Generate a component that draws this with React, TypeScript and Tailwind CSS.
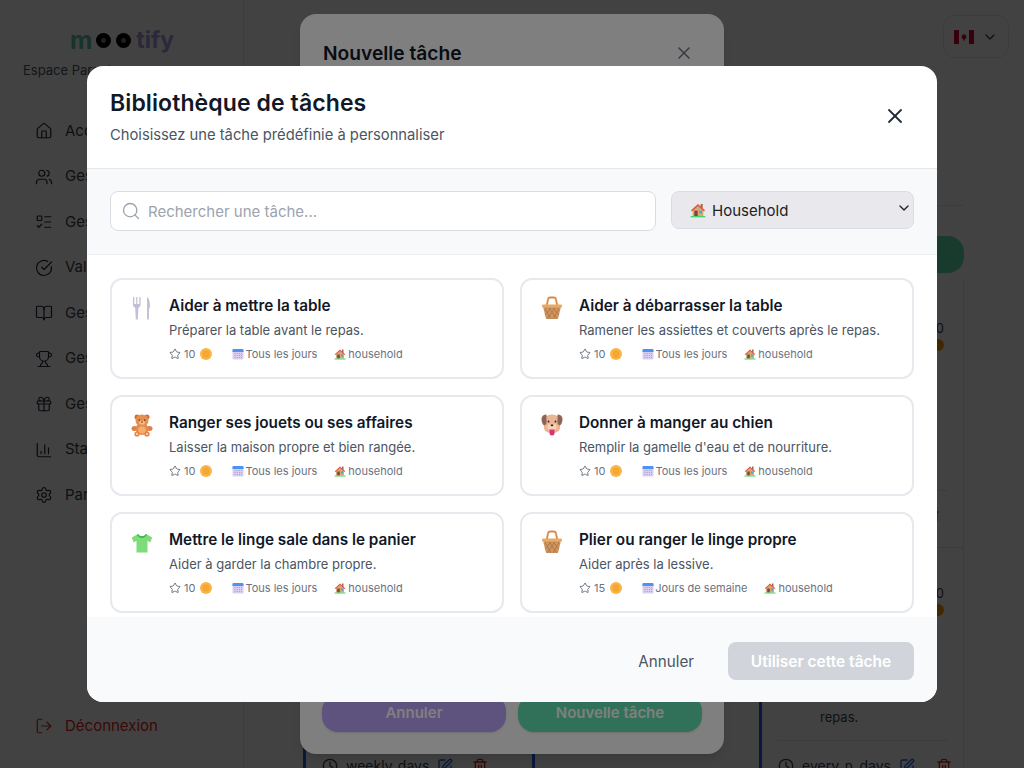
import React from "react";
import {
  BookOpen,
  ChartColumn,
  ChevronDown,
  CircleCheckBig,
  Clock,
  Gift,
  House,
  ListTodo,
  LogOut,
  Search,
  Settings,
  SquarePen,
  Star,
  Trash2,
  Trophy,
  Users,
  X,
} from "lucide-react";

// the emoji are drawn by hand, the sandbox has no colour emoji font
const HouseEmoji = ({ size = 12 }: { size?: number }) => (
  <svg width={size} height={size} viewBox="0 0 24 24" className="shrink-0">
    <rect x="16" y="3" width="3" height="7" fill="#a1664a" />
    <path d="M4 12 12 5l8 7v9H4z" fill="#d9a777" />
    <path d="M1.5 12.5 12 3l10.5 9.5-1.5 1.6L12 6 3 14.1z" fill="#e2583e" />
    <rect x="6.5" y="13" width="5" height="8" fill="#7b4a35" />
    <rect x="14" y="13" width="4" height="4" fill="#3fa9e8" />
    <rect x="1" y="21" width="22" height="2" fill="#45d36b" />
  </svg>
);

const Coin = () => (
  <svg width="12" height="12" viewBox="0 0 24 24" className="shrink-0">
    <circle cx="12" cy="12" r="12" fill="#fbb542" />
    <rect x="7" y="6" width="10" height="12" rx="3" fill="#f6a735" stroke="#eb9a2c" strokeWidth="1.2" />
  </svg>
);

const CalendarEmoji = () => (
  <svg width="12" height="12" viewBox="0 0 24 24" className="shrink-0">
    <rect x="1" y="2" width="22" height="21" rx="2.5" fill="#d9cdf0" />
    <path d="M1 8V4.500A2.500 2.500 0 0 1 3.500 2h17A2.500 2.500 0 0 1 23 4.500V8z" fill="#4b93f2" />
    {[6, 10.5, 15, 19].map((x) =>
      [11, 15, 19].map((y) => <rect key={`${x}-${y}`} x={x - 1} y={y - 1} width="2" height="2" fill="#a79fd6" />)
    )}
  </svg>
);

const Cutlery = () => (
  <svg width="22" height="24" viewBox="0 0 22 24">
    <path d="M2 1v7.500c0 1.800.9 2.800 2.200 3.200L4.800 23.500h2L7.400 11.700C8.700 11.300 9.600 10.300 9.600 8.500V1H8.300v7H6.400V1H5.200v7H3.300V1z" fill="#c4bfd6" />
    <path d="M16 1c2.200 1 3 5 3 9 0 1.500-.5 2.500-1 3l-.2 10.500h-1.800z" fill="#c4bfd6" />
  </svg>
);

const Basket = () => (
  <svg width="22" height="24" viewBox="0 0 22 24">
    <path d="M5.500 11 7 3.500C7.200 2.300 8 1.500 9.200 1.500h3.600c1.200 0 2 .8 2.200 2L16.500 11" fill="none" stroke="#d98a4b" strokeWidth="1.800" />
    <path d="M2 10.500h18L17.300 22a1.500 1.500 0 0 1-1.400 1H6.100a1.500 1.500 0 0 1-1.400-1z" fill="#cf9560" />
    <path d="M5 14l5 9M8 12l8 11M12 12l6 7M17 12l1 2M17 14l-5 9M14 12l-8 11M10 12l-6 7M5 12l-1 2" stroke="#a86f3d" strokeWidth=".7" />
    <rect x="1" y="8.500" width="20" height="3" rx="1" fill="#e8a965" />
  </svg>
);

const Teddy = () => (
  <svg width="22" height="24" viewBox="0 0 22 24">
    <circle cx="6" cy="4" r="2.500" fill="#c9733c" />
    <circle cx="16" cy="4" r="2.500" fill="#c9733c" />
    <ellipse cx="3.500" cy="15.500" rx="3" ry="2.500" fill="#e27f45" />
    <ellipse cx="18.500" cy="15.500" rx="3" ry="2.500" fill="#e27f45" />
    <ellipse cx="11" cy="16" rx="6.500" ry="6" fill="#e58a4c" />
    <ellipse cx="11" cy="17" rx="3.800" ry="3.600" fill="#f5b070" />
    <ellipse cx="11" cy="7.500" rx="6.500" ry="6" fill="#e58f50" />
    <ellipse cx="11" cy="9.500" rx="2.800" ry="2" fill="#f7c08a" />
    <circle cx="8.300" cy="7" r=".8" fill="#5a2e1a" />
    <circle cx="13.700" cy="7" r=".8" fill="#5a2e1a" />
    <circle cx="11" cy="9" r=".8" fill="#5a2e1a" />
    <circle cx="6" cy="21" r="2.600" fill="#e27f45" />
    <circle cx="16" cy="21" r="2.600" fill="#e27f45" />
    <circle cx="6" cy="21" r="1.300" fill="#f9c898" />
    <circle cx="16" cy="21" r="1.300" fill="#f9c898" />
  </svg>
);

const Dog = () => (
  <svg width="22" height="24" viewBox="0 0 22 24">
    <path d="M3 7c0-3 3.500-5.500 8-5.500S19 4 19 7v8c0 3-3.500 5-8 5s-8-2-8-5z" fill="#ebb694" />
    <path d="M5.500 1.500C2.500 1.500.5 3 .5 6c0 2.500.8 5 2 6 1 .8 2.500 0 3-2z" fill="#8f6458" />
    <path d="M16.500 1.500c3 0 5 1.500 5 4.500 0 2.500-.8 5-2 6-1 .8-2.500 0-3-2z" fill="#8f6458" />
    <circle cx="7.500" cy="8.500" r="1" fill="#3d2a26" />
    <circle cx="14.500" cy="8.500" r="1" fill="#3d2a26" />
    <ellipse cx="11" cy="14" rx="4.500" ry="3.200" fill="#f7d3b6" />
    <ellipse cx="11" cy="12.200" rx="1.400" ry="1" fill="#3d2a26" />
    <path d="M8.500 16.500h5v3.500a2.500 2.500 0 0 1-5 0z" fill="#d9357c" />
  </svg>
);

const Shirt = () => (
  <svg width="22" height="24" viewBox="0 0 22 24">
    <path d="M7 4 .8 7.500l1.700 4.700L5.500 11v11.500h11V11l3 1.200 1.700-4.700L15 4c-1 1.500-2.300 2.200-4 2.200S8 5.500 7 4z" fill="#7fdc7a" />
    <path d="M7 4c1 1.500 2.300 2.200 4 2.200S14 5.500 15 4l1 .6C15 6.800 13.200 8 11 8S7 6.800 6 4.600z" fill="#3fb54a" />
  </svg>
);

type Task = {
  icon: React.ReactNode;
  title: string;
  desc: string;
  points: number;
  freq: string;
};

const TASKS: Task[] = [
  { icon: <Cutlery />, title: "Aider à mettre la table", desc: "Préparer la table avant le repas.", points: 10, freq: "Tous les jours" },
  { icon: <Basket />, title: "Aider à débarrasser la table", desc: "Ramener les assiettes et couverts après le repas.", points: 10, freq: "Tous les jours" },
  { icon: <Teddy />, title: "Ranger ses jouets ou ses affaires", desc: "Laisser la maison propre et bien rangée.", points: 10, freq: "Tous les jours" },
  { icon: <Dog />, title: "Donner à manger au chien", desc: "Remplir la gamelle d'eau et de nourriture.", points: 10, freq: "Tous les jours" },
  { icon: <Shirt />, title: "Mettre le linge sale dans le panier", desc: "Aider à garder la chambre propre.", points: 10, freq: "Tous les jours" },
  { icon: <Basket />, title: "Plier ou ranger le linge propre", desc: "Aider après la lessive.", points: 15, freq: "Jours de semaine" },
];

const NAV = [
  { icon: House, label: "Accueil" },
  { icon: Users, label: "Gestion des enfants" },
  { icon: ListTodo, label: "Gestion des tâches" },
  { icon: CircleCheckBig, label: "Validation" },
  { icon: BookOpen, label: "Gestion des lectures" },
  { icon: Trophy, label: "Gestion des défis" },
  { icon: Gift, label: "Gestion des récompenses" },
  { icon: ChartColumn, label: "Statistiques" },
  { icon: Settings, label: "Paramètres" },
];

function TaskCard({ task }: { task: Task }) {
  return (
    <div className="flex h-[101px] gap-4 rounded-xl border-2 border-[#e8e9ee] bg-white pl-[19px] pt-[16px]">
      <div className="w-[22px] shrink-0">{task.icon}</div>
      <div className="min-w-0">
        <div className="text-[15.300px] font-semibold leading-5 text-[#111827]">{task.title}</div>
        <div className="mt-[4px] text-[13px] leading-5 text-[#4b5563]">{task.desc}</div>
        <div className="mt-[4px] flex items-center gap-[17px] text-[11px] leading-5 text-[#6b7280]">
          <span className="mr-[3px] flex items-center">
            <Star size={12} strokeWidth={1.6} className="mr-[3px] text-[#4b5563]" />
            <span className="mr-[5px]">{task.points}</span>
            <Coin />
          </span>
          <span className="flex items-center gap-[1px]">
            <CalendarEmoji />
            {task.freq}
          </span>
          <span className="flex items-center gap-[2px]">
            <HouseEmoji />
            household
          </span>
        </div>
      </div>
    </div>
  );
}

type BackCardProps = {
  height: number;
  topGap: number;
  bodyGap: number;
  footer: string;
  trashGap: number;
  extra?: string;
  edge?: boolean;
};

// cards of the page behind the dialogs, only their edges can be seen
function BackCard({ height, topGap, bodyGap, footer, trashGap, extra, edge }: BackCardProps) {
  return (
    <div className={edge ? "border-l-[3px] border-r border-b border-l-[#2563eb] border-r-[#e5e7eb] border-b-[#e5e7eb]" : "border-l-[3px] border-l-[#2563eb]"} style={{ height }}>
      <div className="flex justify-end pr-[19px]" style={{ paddingTop: topGap }}>
        <div className="flex flex-col items-end gap-[3px] text-[13px] leading-4 text-[#374151]">
          <span>10</span>
          <span className="h-3 w-3 rounded-full bg-[#f59e0b]" />
        </div>
      </div>
      <div className="pl-[58px] text-[13px] leading-5 text-[#374151]" style={{ paddingTop: bodyGap }}>
        {extra ?? "\u00a0"}
      </div>
      <div className="mx-4 mt-[13px] flex items-center gap-2 border-t border-[#e5e7eb] pt-[15px] text-[14px] leading-5 text-[#374151]">
        <Clock size={16} />
        <span>{footer}</span>
        <SquarePen size={16} className="text-[#2563eb]" />
        <Trash2 size={16} className="ml-auto text-[#dc2626]" style={{ marginRight: trashGap }} />
      </div>
    </div>
  );
}

export default function App() {
  return (
    <div
      className="relative flex h-[768px] w-full overflow-hidden bg-white"
      style={{ fontFamily: "Inter, 'Noto Sans', sans-serif" }}
    >
      {/* Page behind the dialogs */}
      <aside className="flex w-[244px] shrink-0 flex-col border-r border-[#e5e7eb] pb-[32px]">
        <div className="flex items-center pl-[70px] pt-[23px] text-[23px] font-bold leading-[34px]">
          <span className="text-[24.500px] text-[#55c79f]">m</span>
          <span className="ml-[4px] flex h-[15px] w-[15px] items-center justify-center rounded-full bg-black">
            <span className="h-[5px] w-[5px] rounded-full bg-[#777]" />
          </span>
          <span className="mx-[5px] flex h-[15px] w-[15px] items-center justify-center rounded-full bg-black">
            <span className="h-[5px] w-[5px] rounded-full bg-[#777]" />
          </span>
          <span className="text-[#a999e0]">tify</span>
        </div>
        <div className="mt-[3px] pl-[23px] text-[13px] leading-5 text-[#4b5563]">Espace Parent</div>
        <nav className="mt-[41px] flex flex-col gap-[25.500px] pl-[35px]">
          {NAV.map((item) => (
            <div key={item.label} className="flex h-5 items-center gap-[12px] whitespace-nowrap text-[15px] text-[#374151]">
              <item.icon size={18} strokeWidth={1.6} className="shrink-0 text-[#1f2937]" />
              {item.label}
            </div>
          ))}
        </nav>
        <div className="mt-auto flex items-center gap-[12px] pl-[35px] text-[15px] leading-5 text-[#dc2626]">
          <LogOut size={18} strokeWidth={1.6} />
          Déconnexion
        </div>
      </aside>

      <main className="flex min-w-0 flex-1 flex-col pl-[59px] pr-[60px]">
        <div className="mr-[-45px] flex justify-end pt-[15px]">
          <div className="flex h-[43px] w-[66px] items-center justify-center gap-[8px] rounded-xl border border-[#e5e7eb]">
            <svg width="20" height="14" viewBox="0 0 20 14">
              <rect width="20" height="14" rx="1.500" fill="#fff" />
              <rect width="5" height="14" fill="#d80027" />
              <rect x="15" width="5" height="14" fill="#d80027" />
              <path d="M10 3.500l1 1.800 1.300-.4-.4 2 1.100.6-2.300 1.700.2 1.300h-1.800l.2-1.300L7 7.500l1.100-.6-.4-2 1.300.4z" fill="#d80027" />
            </svg>
            <ChevronDown size={16} className="text-[#374151]" />
          </div>
        </div>
        <div className="mt-[147px] border-t border-[#e5e7eb]" />
        <div className="mt-[30px] flex justify-end">
          <div className="flex h-[37px] w-[190px] items-center justify-center rounded-2xl bg-[#62e3b2] text-[15px] font-semibold text-white">
            Nouvelle tâche
          </div>
        </div>
        <div className="mt-[7px] grid grid-cols-[224px_222px_205px] gap-[5px]">
          <BackCard height={500} topGap={40} bodyGap={356} footer="weekly_days" trashGap={23} />
          <div className="h-[500px] border-l-[3px] border-l-[#2563eb]" />
          <div className="flex flex-col">
            <BackCard height={268} topGap={40} bodyGap={106} footer="daily" trashGap={7} edge />
            <BackCard height={240} topGap={37} bodyGap={91} footer="every_n_days" trashGap={-5} extra="repas." edge />
          </div>
        </div>
      </main>

      {/* First dialog: new task */}
      <div className="absolute inset-0 flex items-center justify-center bg-black/[.48]">
        <div className="flex h-[740px] w-[424px] flex-col rounded-2xl bg-white px-[22px] pb-[22px] pt-[27px] shadow-lg">
          <div className="flex items-center justify-between pl-[1px]">
            <div className="text-[19.200px] font-semibold leading-6 text-[#111827]">Nouvelle tâche</div>
            <X size={20} strokeWidth={1.8} className="mr-[8px] text-[#6b7280]" />
          </div>
          <div className="mt-auto flex gap-3">
            <div className="flex h-[37px] flex-1 items-center justify-center rounded-2xl bg-[#bda5ff] text-[15px] font-semibold text-white shadow">
              Annuler
            </div>
            <div className="flex h-[37px] flex-1 items-center justify-center rounded-2xl bg-[#62e3b2] text-[15px] font-semibold text-white shadow">
              Nouvelle tâche
            </div>
          </div>
        </div>
      </div>

      {/* Second dialog: task library */}
      <div className="absolute inset-0 flex items-center justify-center bg-black/50">
        <div className="flex h-[636px] w-[850px] flex-col overflow-hidden rounded-2xl bg-white">
          <div className="flex h-[103px] shrink-0 items-start justify-between border-b border-[#e5e7eb] px-[23px] pt-[22px]">
            <div>
              <div className="text-[23px] font-semibold leading-[30px] tracking-[0.1px] text-[#111827]">Bibliothèque de tâches</div>
              <div className="mt-[6px] text-[14.750px] leading-[22px] text-[#4b5563]">
                Choisissez une tâche prédéfinie à personnaliser
              </div>
            </div>
            <X size={24} strokeWidth={1.8} className="mr-[7px] mt-[16px] text-[#1f2937]" />
          </div>

          <div className="flex h-[86px] shrink-0 items-start gap-[15px] border-b border-[#eceef2] bg-[#f8f9fb] px-[23px] pt-[22px]">
            <div className="flex h-10 w-[546px] items-center gap-[7px] rounded-lg border border-[#d9dce3] bg-white pl-[10px] text-[15px] text-[#9ca3af]">
              <Search size={20} strokeWidth={1.6} />
              <span className="pt-[2px]">Rechercher une tâche...</span>
            </div>
            <div className="flex h-[38px] flex-1 items-center rounded-lg border border-[#d9dce3] bg-[#e8e8ed] pl-[18px] pr-[1px] text-[15px] text-[#222]">
              <HouseEmoji size={16} />
              <span className="ml-[6px] pt-[3px]">Household</span>
              <ChevronDown size={16} strokeWidth={2} className="mb-[4px] ml-auto" />
            </div>
          </div>

          <div className="grid h-[362px] shrink-0 grid-cols-2 content-start gap-x-4 gap-y-4 overflow-hidden px-[23px] pt-[22.500px]">
            {TASKS.map((task) => (
              <TaskCard key={task.title} task={task} />
            ))}
          </div>

          <div className="flex flex-1 items-center justify-end gap-[34px] bg-[#f9fafb] px-[23px] pt-[2px]">
            <div className="pt-[3px] text-[15.200px] text-[#4b5563]">Annuler</div>
            <div className="flex h-[38px] w-[186px] items-center justify-center rounded-lg bg-[#d1d5db] pt-[2px] text-[15.500px] font-semibold text-white">
              Utiliser cette tâche
            </div>
          </div>
        </div>
      </div>
    </div>
  );
}
